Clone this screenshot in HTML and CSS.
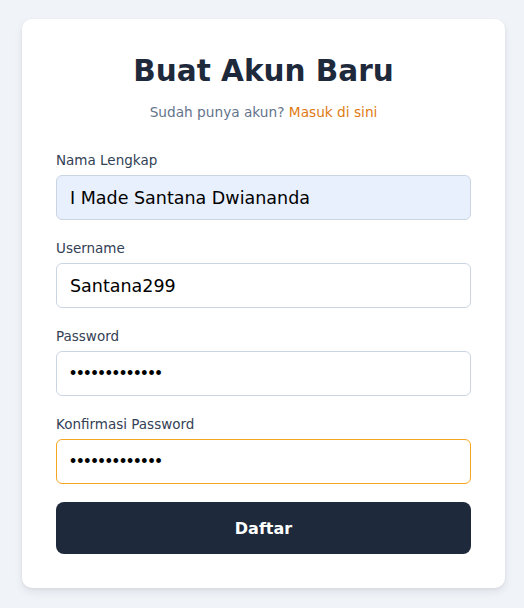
FILE: index.html
```html
<!DOCTYPE html>
<html lang="id">
<head>
<meta charset="utf-8">
<title>Buat Akun Baru</title>
<link rel="stylesheet" href="styles.css">
</head>
<body>
<main class="card">
  <h1 class="title">Buat Akun Baru</h1>
  <p class="subtitle">Sudah punya akun? <a class="link" href="#">Masuk di sini</a></p>
  <form class="form">
    <div class="field">
      <label class="label" for="nama">Nama Lengkap</label>
      <input class="input input-autofill" id="nama" type="text" value="I Made Santana Dwiananda">
    </div>
    <div class="field">
      <label class="label" for="user">Username</label>
      <input class="input" id="user" type="text" value="Santana299">
    </div>
    <div class="field">
      <label class="label" for="pass">Password</label>
      <input class="input input-pass" id="pass" type="password" value="santana123456">
    </div>
    <div class="field">
      <label class="label" for="pass2">Konfirmasi Password</label>
      <input class="input input-pass input-focus" id="pass2" type="password" value="santana123456">
    </div>
    <button class="button" type="button">Daftar</button>
  </form>
</main>
</body>
</html>
```

FILE: styles.css
```css
* { box-sizing: border-box; }
html, body { margin: 0; padding: 0; }
body {
  background: #f0f3f8;
  font-family: "DejaVu Sans", "Open Sans", sans-serif;
  padding-top: 19px;
  min-height: 608px;
}
.card {
  width: 483px;
  margin: 0 0 0 22px;
  background: #ffffff;
  border-radius: 10px;
  box-shadow: 0 4px 8px rgba(15, 23, 42, 0.08), 0 1px 3px rgba(15, 23, 42, 0.06);
  padding: 33px 34px 34px;
}
.title {
  margin: 0;
  text-align: center;
  font-size: 29.5px;
  line-height: 38px;
  font-weight: 700;
  color: #1e293b;
}
.subtitle {
  margin: 12px 0 0;
  text-align: center;
  font-size: 13.7px;
  line-height: 20px;
  color: #64748b;
}
.link { color: #e07b12; text-decoration: none; }
.form {
  margin-top: 27px;
  display: flex;
  flex-direction: column;
  gap: 17px;
}
.field { display: flex; flex-direction: column; gap: 5px; }
.label {
  font-size: 13.5px;
  line-height: 20px;
  color: #334155;
  padding-top: 1px;
}
.input {
  width: 100%;
  height: 45px;
  border: 1px solid #cbd5e1;
  border-radius: 6px;
  padding: 0 13px;
  font-family: inherit;
  font-size: 17.5px;
  color: #000;
  background: #fff;
  outline: none;
}
.input-pass {
  font-family: "Liberation Sans", Arial, sans-serif;
  letter-spacing: 1px;
}
.input-autofill { background: #e8f0fe; }
.input-focus { border-color: #f5a524; }
.button {
  margin-top: 1px;
  height: 52px;
  border: none;
  border-radius: 8px;
  background: #1e293b;
  color: #fff;
  font-family: inherit;
  font-size: 16px;
  font-weight: 700;
}
```
